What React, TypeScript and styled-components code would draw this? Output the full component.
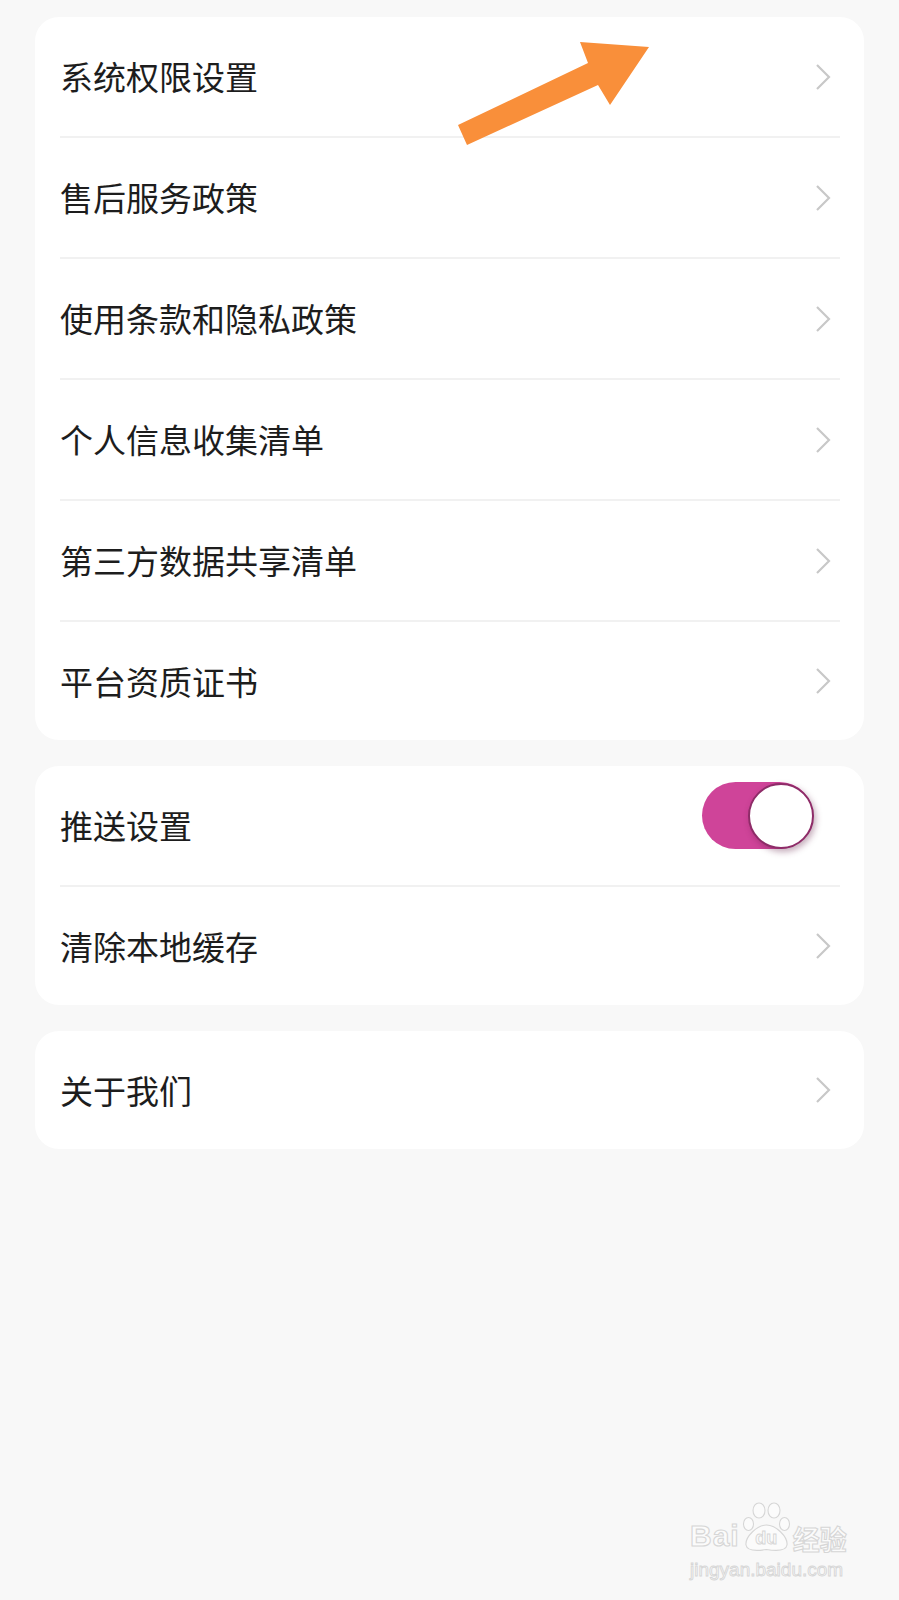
import { FunctionComponent } from 'react';
import styled, { createGlobalStyle } from 'styled-components';

const GlobalStyle = createGlobalStyle`
  html, body {
    margin: 0;
    padding: 0;
    background: #f8f8f8;
  }
  body {
    font-family: 'Noto Sans CJK SC', 'Noto Sans', sans-serif;
    color: #1d1d1d;
  }
`;

const Page = styled.div`
  position: relative;
  min-height: 1600px;
  box-sizing: border-box;
  padding: 17px 35px 0;
  display: flex;
  flex-direction: column;
  gap: 26px;
`;

const Card = styled.section`
  background: #ffffff;
  border-radius: 24px;
  overflow: hidden;
`;

const Row = styled.div`
  padding: 0 24px 0 25px;
  &:last-child > div {
    height: 118px;
    border-bottom: none;
  }
`;

const RowInner = styled.div`
  box-sizing: border-box;
  height: 121px;
  border-bottom: 2px solid #f1f1f1;
  display: flex;
  align-items: center;
  justify-content: space-between;
`;

const Label = styled.span`
  font-size: 33px;
  line-height: 1;
  color: #1d1d1d;
`;

const Chevron = styled.svg`
  width: 16px;
  height: 28px;
  margin-right: 9px;
  flex: none;
`;

const Toggle = styled.div<{ $on: boolean }>`
  position: relative;
  width: 111px;
  height: 67px;
  border-radius: 34px;
  margin: 0 27px 21px 0;
  background: ${(p) => (p.$on ? '#cf4499' : '#dcdcdc')};
  flex: none;
`;

const Knob = styled.div<{ $on: boolean }>`
  position: absolute;
  top: 1px;
  left: ${(p) => (p.$on ? '46px' : '1px')};
  width: 62px;
  height: 62px;
  border-radius: 50%;
  background: #fff;
  border: 2px solid #8e2c68;
  box-shadow: 2px 3px 6px rgba(90, 20, 60, 0.35);
`;

const Arrow = styled.svg`
  position: absolute;
  left: 0;
  top: 0;
  width: 700px;
  height: 160px;
  pointer-events: none;
`;

const Watermark = styled.div`
  position: absolute;
  left: 690px;
  top: 1502px;
  display: flex;
  flex-direction: column;
  align-items: flex-start;
  pointer-events: none;
`;

const MarkLine = styled.div`
  display: flex;
  align-items: flex-end;
  height: 50px;
`;

const MarkText = styled.span<{ $size: number; $cjk?: boolean }>`
  font-family: ${(p) =>
    p.$cjk ? "'Noto Sans CJK SC', sans-serif" : "'Liberation Sans', Arial, sans-serif"};
  font-weight: 700;
  font-size: ${(p) => p.$size}px;
  line-height: 1;
  color: #fbfbfb;
  -webkit-text-stroke: 1.1px #d6d6d6;
`;

const Bai = styled(MarkText)`
  letter-spacing: 1px;
  margin-bottom: 1px;
`;

const Paw = styled.span`
  position: relative;
  width: 49px;
  height: 50px;
  margin: 0 2px 0 2px;
  display: flex;
  align-items: flex-end;
  justify-content: center;
`;

const PawShape = styled.svg`
  position: absolute;
  left: 0;
  top: 0;
  width: 49px;
  height: 50px;
`;

const PawText = styled(MarkText)`
  position: relative;
  padding-bottom: 5px;
  -webkit-text-stroke: 0.9px #d6d6d6;
`;

const Domain = styled.span`
  font-family: 'Liberation Sans', Arial, sans-serif;
  font-size: 19px;
  line-height: 1;
  margin-top: 8px;
  color: #fbfbfb;
  -webkit-text-stroke: 0.9px #d6d6d6;
`;

const ChevronIcon = () => (
  <Chevron viewBox='0 0 16 28'>
    <polyline
      points='2,2 14,14 2,26'
      fill='none'
      stroke='#c8c8c8'
      strokeWidth='2.2'
    />
  </Chevron>
);

interface ItemProps {
  label: string;
  toggle?: boolean;
}

const Item: FunctionComponent<ItemProps> = ({ label, toggle }: ItemProps) => (
  <Row>
    <RowInner>
      <Label>{label}</Label>
      {toggle ? (
        <Toggle $on>
          <Knob $on />
        </Toggle>
      ) : (
        <ChevronIcon />
      )}
    </RowInner>
  </Row>
);

const groups: ItemProps[][] = [
  [
    { label: '系统权限设置' },
    { label: '售后服务政策' },
    { label: '使用条款和隐私政策' },
    { label: '个人信息收集清单' },
    { label: '第三方数据共享清单' },
    { label: '平台资质证书' },
  ],
  [{ label: '推送设置', toggle: true }, { label: '清除本地缓存' }],
  [{ label: '关于我们' }],
];

const App = () => (
  <>
    <GlobalStyle />
    <Page>
      {groups.map((items, i) => (
        <Card key={i}>
          {items.map((item) => (
            <Item key={item.label} {...item} />
          ))}
        </Card>
      ))}

      <Arrow viewBox='0 0 700 160'>
        <polygon
          points='458,125 588,63 580,42 649,47 610,105 598,85 467,145'
          fill='#f98f3a'
        />
      </Arrow>

      <Watermark>
        <MarkLine>
          <Bai $size={30}>Bai</Bai>
          <Paw>
            <PawShape viewBox='0 0 49 50'>
              <g fill='#fbfbfb' stroke='#d6d6d6' strokeWidth='1.1'>
                <ellipse cx='6.5' cy='22' rx='5' ry='6.5' />
                <ellipse cx='17' cy='8.5' rx='6' ry='7.5' />
                <ellipse cx='32' cy='8.5' rx='6' ry='7.5' />
                <ellipse cx='42.5' cy='22' rx='5' ry='6.5' />
                <path d='M24.5 23 C 34 23, 46 35, 45 43 C 44 49, 34 49, 24.5 47.5 C 15 49, 5 49, 4 43 C 3 35, 15 23, 24.5 23 Z' />
              </g>
            </PawShape>
            <PawText $size={18}>du</PawText>
          </Paw>
          <MarkText $size={27} $cjk>
            经验
          </MarkText>
        </MarkLine>
        <Domain>jingyan.baidu.com</Domain>
      </Watermark>
    </Page>
  </>
);

export default App;
